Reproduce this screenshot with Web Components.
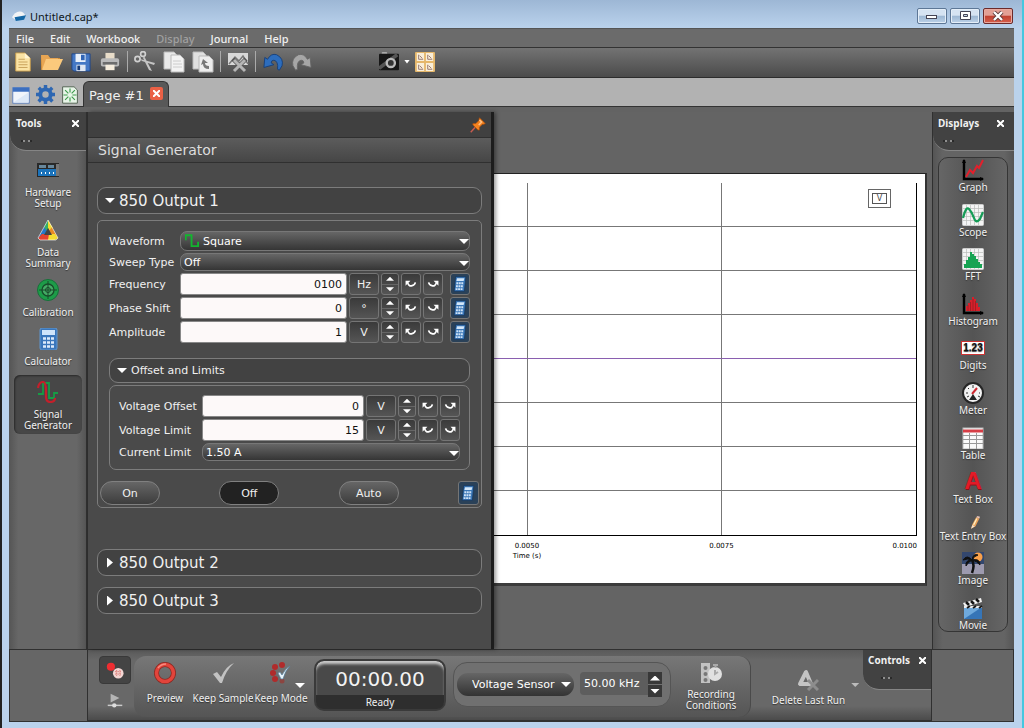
<!DOCTYPE html>
<html lang="en">
<head>
<meta charset="utf-8">
<title>Untitled.cap*</title>
<style>
html,body{margin:0;height:100%}
body{font-family:"Noto Sans","Open Sans",sans-serif;font-size:10px;color:#f0f0f0;background:#b9d1ea}
</style>
</head>
<body>
<app-window></app-window>
<script>
const A='<path d="M2 1v19h19" fill="none" stroke="#000" stroke-width="2.4"/><path d="M2 0l-2 4h4zM22 20l-4-2v4z" fill="#000"/>';
const GRID='<rect x=".5" y=".5" width="21" height="21" rx="1" fill="#f4f4f4" stroke="#ccc"/><path d="M4.500 1v20M8.500 1v20M12.500 1v20M16.500 1v20M1 4.500h20M1 8.500h20M1 12.500h20M1 16.500h20" stroke="#b9bcb9" stroke-width=".7"/>';
const ICONS={
 app:'<path d="M0 13Q4 5 12 4q7 0 9 8l-3 5H5z" fill="#f1f3f5"/><path d="M4 13l18-3-3 7-13 2z" fill="#1467a5"/>',
 doc:'<path d="M3 1h10l6 6v14H3z" fill="#fbe3a4" stroke="#c79a4a"/><path d="M13 1v6h6z" fill="#fff5d5"/><path d="M6 8h7M6 11h10M6 14h10M6 17h10" stroke="#c49d56"/>',
 folder:'<path d="M0 5h7l2 2h10v3H4L1 19H0z" fill="#c98937"/><path d="M0 4h7l2 3h8v11H1z" fill="#e7a553"/><path d="M5 8h17l-5 11H1z" fill="#fbc97c"/>',
 save:'<path d="M1 2h20v19H3l-2-2z" fill="#4478c5" stroke="#1f4587"/><rect x="5" y="2" width="11" height="9" fill="#e8f0fa"/><rect x="11" y="3" width="4" height="6" fill="#2f64b5"/><rect x="6" y="14" width="10" height="7" fill="#dfe7f2"/><rect x="7" y="15" width="3" height="5" fill="#163a77"/>',
 print:'<path d="M6 1h10v7H6z" fill="#e8dcc9"/><rect x="1" y="7" width="20" height="9" rx="2" fill="#b9b9b9"/><rect x="3" y="11" width="16" height="3" fill="#6c6c6c"/><path d="M6 14h10v6H6z" fill="#f5ecdc"/>',
 cut:'<circle cx="3.500" cy="8" r="2.600" fill="none" stroke="#d0d0d0" stroke-width="1.700"/><circle cx="9" cy="3" r="2.400" fill="none" stroke="#d0d0d0" stroke-width="1.700"/><path d="M6 8l15 4-1 2-12-4zM10 5l8 15-3-1-6-12z" fill="#c4c4c4"/>',
 copy:'<path d="M1 1h10l3 3v14H1z" fill="#e9e9e9" stroke="#bbb"/><path d="M8 4h9l4 4v13H8z" fill="#f3f3f3" stroke="#bbb"/><path d="M10 10h8M10 13h9M10 16h9" stroke="#ccc"/>',
 paste:'<path d="M1 1h10l3 3v14H1z" fill="#e0e0e0" stroke="#bbb"/><path d="M7 5h10l4 4v12H7z" fill="#ededed" stroke="#bbb"/><path d="M17 18q-6 0-6-5l-2 1 2-6 5 4-3 0q0 3 4 3z" fill="#777"/>',
 del:'<rect x="1" y="2" width="20" height="12" fill="#d8d8d8"/><path d="M2 13l6-7 4 4 4-5 5 8" fill="none" stroke="#777" stroke-width="1.500"/><path d="M6 8l13 13M19 8L6 21" stroke="#555" stroke-width="4.500"/><path d="M7 9l11 11M18 9L7 20" stroke="#b5b5b5" stroke-width="3"/>',
 undo:'<path d="M1 17L2 6l3 2Q9 1 15 3q8 4 6 12l-3 5-2-1q1-9-4-10-3 0-3 3l3 2z" fill="#2d6dbd" stroke="#173f78"/>',
 redo:'<path d="M21 17L20 6l-3 2Q13 1 7 3-1 7 1 15l3 5 2-1q-1-9 4-10 3 0 3 3l-3 2z" fill="#a6a6a6" stroke="#666"/>',
 camera:'<rect x="3" y="0" width="6" height="3" rx="1" fill="#aaa"/><rect x="0" y="2" width="22" height="18" rx="1" fill="#171717"/><path d="M0 18L20 3" stroke="#555" stroke-width="4"/><circle cx="13" cy="12" r="4.500" fill="#333" stroke="#bbb" stroke-width="2.600"/>',
 book:'<rect x="0" y="0" width="22" height="22" rx="1" fill="#e5b76b"/><path d="M2 1h8v9H2zM12 1h8v9h-8zM2 12h8v9H2zM12 12h8v9h-8z" fill="#f9eed9"/><path d="M4 3v5h5M14 3v5h5M4 14v5h5M14 14v5h5M5 4l3 3M15 4l3 3M5 15l3 3M15 15l3 3" fill="none" stroke="#8f6f69"/>',
 page:'<rect x="1" y="2" width="20" height="19" fill="#f1f5fb" stroke="#4f78bd"/><path d="M1 2h20v5H1z" fill="#3c6fc0"/><path d="M2 20L20 8v12z" fill="#dce8f7"/>',
 gear:'<circle cx="11" cy="11" r="6" fill="none" stroke="#2e67b2" stroke-width="4.500"/><path d="M11 0v4M11 18v4M0 11h4M18 11h4M3.200 3.200l3 3M16 16l3 3M18.800 3.200l-3 3M6 16l-3 3" stroke="#2e67b2" stroke-width="4"/>',
 newpg:'<path d="M2 1h14l4 4v16H2z" fill="#e8f5e8" stroke="#3d503d"/><path d="M11 3v5M11 14v5M3 11h5M14 11h5M5 5l4 4M17 17l-4-4M5 17l4-4M17 5l-4 4" stroke="#3d9b4c" stroke-width="1.400"/>',
 pin:'<path d="M1 21l8-9" stroke="#c75c50" stroke-width="2"/><path d="M13 1l8 8-2 1-2 0-4 4v4l-2 0-7-7 0-2h4l4-4z" fill="#f5831f" stroke="#a94d0c"/><path d="M13 4l3 3-4 4" fill="none" stroke="#ffc184" stroke-width="2"/>',
 hardware:'<rect x="0" y="4" width="22" height="14" fill="#292929"/><path d="M2 6h7v3H2zM11 6h6v3h-6z" fill="#67879c"/><rect x="1" y="10" width="18" height="7" fill="#1b73bb"/><path d="M4 14h1M8 14h1M12 14h1M16 14h1" stroke="#fff" stroke-width="2"/><path d="M19 5h3v12h-3z" fill="#777"/>',
 data:'<path d="M11 1L1 19l4 2 6-11z" fill="#2478c8"/><path d="M11 1L7 8l3 4 3-6z" fill="#36ae65"/><path d="M11 1l5 8-2 5-3-5z" fill="#f4dc31"/><path d="M15 8l6 11-4 2-5-9z" fill="#e88a23"/><path d="M1 19l4-4h8l-1 6H3z" fill="#e3422f"/><path d="M12 15h6l3 4-3 2h-7z" fill="#f4dc31"/><path d="M11 9l-4 7h8z" fill="#444"/><path d="M11 1L1 19l2 2h16l2-2z" fill="none" stroke="#fff" stroke-opacity=".6" stroke-linejoin="round"/>',
 calib:'<circle cx="11" cy="11" r="10.500" fill="#1d9c48" stroke="#17703a"/><circle cx="11" cy="11" r="6" fill="#45aa65" stroke="#184b2a" stroke-width="1.300"/><circle cx="11" cy="11" r="2.500" fill="none" stroke="#184b2a"/><path d="M11 2v18M2 11h18" stroke="#184b2a"/>',
 calc:'<rect x="3" y="0" width="17" height="22" rx="2" fill="#3a76bb" stroke="#6197cf"/><rect x="5" y="2" width="13" height="5" fill="#cfe4fa"/><path d="M6 10.500h3M10 10.500h3M14 10.500h3M6 14.500h3M10 14.500h3M14 14.500h3M6 18.500h3M10 18.500h3M14 18.500h3" stroke="#dceafb" stroke-width="2.600"/>',
 minicalc:'<path d="M5 1h14l-2 20H3z" fill="#3b78b8" stroke="#15355a"/><path d="M7 3h10l-1 4H6z" fill="#d3e7fa"/><path d="M6 10h10M5.500 14h10M5 18h10" stroke="#cfe2f6" stroke-width="2.600" stroke-dasharray="2.600 .8"/>',
 signal:'<path d="M1 13h5V2h6v15h5v-5h4" fill="none" stroke="#169c45" stroke-width="1.800"/><path d="M1 7q1-6 5-6 3 0 3 9v5q0 6 4 6 5 0 5-4" fill="none" stroke="#c41f2a" stroke-width="2.200"/>',
 graph:A+'<path d="M4 18l4-7 3 3 4-7 2 2 4-8" fill="none" stroke="#e1202c" stroke-width="2"/>',
 scope:GRID+'<path d="M1 14Q4 2 7 5t5 9 6 1l3-7" fill="none" stroke="#169c57" stroke-width="2.300"/>',
 fft:GRID+'<path d="M2 20v-4h2v-4h2V9h2V4h2v2h2v2h2v3h2v3h2v2h2v4z" fill="#16a352"/>',
 hist:A+'<path d="M4 18v-5h2v-3h2V7h2V4h2v2h2v4h2v4h2v4z" fill="#d81f2a"/><path d="M6 18v-6M8.500 18V9M11 18V6M13.500 18V8" stroke="#8d1d22" stroke-width=".7"/>',
 meter:'<circle cx="11" cy="11" r="10" fill="#f3f3f3" stroke="#252525" stroke-width="2"/><path d="M4 11h2M6 6l1 1M11 3v3M17 11h1M5 15l2-1M16 14l2 1" stroke="#333"/><path d="M10 12l5-6" stroke="#ce2830" stroke-width="2"/><path d="M7 18h8l-4-6z" fill="#222"/>',
 table:'<rect x="1" y="1" width="20" height="21" fill="#fafafa" stroke="#bbb"/><path d="M1 4h20" stroke="#d63e46" stroke-width="3"/><path d="M1 8.500h20M1 12.500h20M1 16.500h20M7.500 6v16M14.500 6v16" stroke="#999"/>',
 pencil:'<path d="M8 20l2-7 6-11 5 2-6 12z" fill="#e9a15b"/><path d="M16 2l5 2 1-3-4-1z" fill="#e5c1b5"/><path d="M8 20l2-6 4 2z" fill="#f1e2ce"/><path d="M12 14l5-10" stroke="#fff0c1" stroke-width="2"/>',
 image:'<rect x="0" y="0" width="22" height="22" fill="#33476e"/><path d="M0 12h22v10H0z" fill="#9d9aaf"/><circle cx="16" cy="5" r="4.500" fill="#f9a04a"/><path d="M10 21q3-8 0-13" fill="none" stroke="#101010" stroke-width="2.500"/><path d="M10 8Q5 2 1 8q5-2 9 0-7 0-6 6 2-4 6-6 1-7 6-5-4 1-6 5 8-2 8 5-3-4-8-5z" fill="#101010" stroke="#101010"/>',
 movie:'<path d="M2 10h18v12H2z" fill="#6fa9dc"/><path d="M2 22L20 10v12z" fill="#3675b7"/><path d="M1 6l18-5 1 4L3 10z" fill="#f2f2f2"/><path d="M4 5l3 3M9 4l3 3M14 2l3 3" stroke="#171717" stroke-width="2.500"/><path d="M2 10h18" stroke="#eee" stroke-width="2"/><path d="M5 11l3-2M11 11l3-2M17 11l3-2" stroke="#171717" stroke-width="2"/>',
 preview:'<circle cx="11" cy="11" r="8.500" fill="none" stroke="#8c2922" stroke-width="5"/><circle cx="11" cy="11" r="8.500" fill="none" stroke="#e2443b" stroke-width="3.500"/><path d="M4 6q3-4 8-4" fill="none" stroke="#fa8a7e" stroke-width="1.500"/>',
 check:'<path d="M1 12l4-2 4 5Q14 4 22 1q-8 7-12 20H8z" fill="#c2c2c2"/>',
 keep:'<g fill="#b02b2b"><circle cx="12" cy="3" r="3"/><circle cx="5" cy="5" r="3"/><circle cx="3" cy="11" r="3"/><circle cx="5" cy="17" r="3"/><circle cx="12" cy="19" r="2.500" fill="#8c4540"/></g><path d="M8 11l2-1 2 3q3-6 8-9-5 5-7 13h-2z" fill="#e8f3fa" stroke="#55809d" stroke-width=".7"/>',
 record:'<circle cx="6" cy="7" r="5" fill="#ef2d31"/><circle cx="15" cy="15" r="6.500" fill="#f3d6d3"/><path d="M11 13h8M11 16h8M13 11v8M17 11v8" stroke="#d35550" stroke-dasharray="1 1"/>',
 play:'<path d="M5 1v12l12-6z" fill="#b5b5b5"/><path d="M1 17h20" stroke="#ccc" stroke-width="2"/><circle cx="10" cy="17" r="3" fill="#ddd"/>',
 cond:'<path d="M1 1h9v20H1z" fill="#c2c2c2"/><circle cx="5.500" cy="6" r="2" fill="#777"/><circle cx="5.500" cy="12" r="2" fill="#777"/><circle cx="5.500" cy="18" r="2" fill="#777"/><circle cx="15" cy="12" r="7" fill="#e0e0e0"/><path d="M13 3h5M15.500 3v3M15 8v4l3-2" stroke="#aaa" stroke-width="2" fill="none"/>',
 delrun:'<path d="M9 3L3 15h11z" fill="none" stroke="#c4c4c4" stroke-width="4" stroke-linejoin="round"/><path d="M11 11l10 10M21 11L11 21" stroke="#8d8d8d" stroke-width="3"/>',
 square:'<path d="M1 10V3h8v15h9v-6" fill="none" stroke="#12b52f" stroke-width="2.600"/>',
 cw:'<path d="M5 9q2 7 8 5 5-1 6-6" fill="none" stroke="#fff" stroke-width="3"/><path d="M1 14V5h9z" fill="#fff"/>',
 ccw:'<path d="M17 9q-2 7-8 5-5-1-6-6" fill="none" stroke="#fff" stroke-width="3"/><path d="M21 14V5h-9z" fill="#fff"/>'
};
const define=(name,html,setup)=>customElements.define(name,class extends HTMLElement{
 connectedCallback(){
  if(this.shadowRoot)return;
  const root=this.attachShadow({mode:'open'});
  root.innerHTML=typeof html==='function'?html(this):html;
  if(setup)setup(this,root);
 }
});
const BTN='button{font:inherit;color:inherit;padding:0;margin:0;border:0;background:none;display:flex;align-items:center;justify-content:center}';
const KEY='.key{border:1px solid #757575;border-radius:3px;background:linear-gradient(#3a3a3a,#555);box-sizing:border-box}';

define('ui-icon',el=>`<style>:host{display:block;flex:none;width:${el.getAttribute('size')||22}px;height:${el.getAttribute('size')||22}px}svg{display:block;width:100%;height:100%}</style><svg viewBox="0 0 22 22" aria-hidden="true">${ICONS[el.getAttribute('name')]}</svg>`);

define('ui-arrow',`<style>:host{display:block;flex:none;width:10px;height:5px;background:#fff;clip-path:polygon(0 0,100% 0,50% 100%)}:host([dir=up]){clip-path:polygon(0 100%,100% 100%,50% 0)}:host([dir=right]){width:6px;height:10px;clip-path:polygon(0 0,100% 50%,0 100%)}:host([small]){width:8px;height:4px}</style>`);

define('title-bar',`<style>${BTN}
:host{display:flex;align-items:center;height:28px;color:#101820;font-size:11px;box-sizing:border-box;padding:4px 1px 0 3px}
h1{flex:1;font:inherit;margin:0 0 0 4px}
.b{display:flex;gap:3px;padding-bottom:1px}
button{width:30px;height:16px;border:1px solid #5d7796;border-radius:2px;background:linear-gradient(#d5e3f2 45%,#9cb7d3 50%,#bdd2e8);box-shadow:inset 0 0 0 1px #e4eef8}
.close{background:linear-gradient(#e3a095 45%,#c14030 50%,#d5604c);border-color:#6b2a2a;box-shadow:inset 0 0 0 1px #e8aaa0}
svg{display:block}
</style><ui-icon name="app" size="14"></ui-icon><h1>Untitled.cap*</h1>
<div class="b"><button aria-label="Minimize"><svg width="12" height="8"><rect x=".5" y="3.500" width="10" height="3" fill="#fff" stroke="#445"/></svg></button>
<button aria-label="Maximize"><svg width="11" height="9"><path d="M.5.5h10v8H.5zM3.500 3.500v2h4v-2z" fill="#fff" fill-rule="evenodd" stroke="#445"/></svg></button>
<button class="close" aria-label="Close"><svg width="12" height="10"><path d="M2 1l8 8M10 1L2 9" stroke="#5b3a3a" stroke-width="4"/><path d="M2 1l8 8M10 1L2 9" stroke="#fff" stroke-width="2.400"/></svg></button></div>`);

define('menu-bar',`<style>${BTN}:host{display:flex;height:18px;background:#6b6b6b;border-bottom:1px solid #333;padding-left:7px;gap:16px;font-size:11px;font-weight:500}button:disabled{color:#a0a0a0}</style>
<button>File</button><button>Edit</button><button>Workbook</button><button disabled>Display</button><button>Journal</button><button>Help</button>`);

define('tool-bar',`<style>${BTN}:host{display:flex;align-items:center;box-sizing:border-box;height:30px;background:linear-gradient(#737373,#4b4b4b);border-bottom:1px solid #2c2c2c;padding:0 0 2px 3px}
div{display:flex;gap:8px;align-items:center}i{width:1px;height:21px;background:#aaa;margin:0 6px 0 7px}.l button{width:21px}.r{margin-left:67px;gap:5px}</style>
<div class="l"><button aria-label="New"><ui-icon name="doc" size="20"></ui-icon></button><button aria-label="Open"><ui-icon name="folder"></ui-icon></button><button aria-label="Save"><ui-icon name="save" size="20"></ui-icon></button><button aria-label="Print"><ui-icon name="print" size="20"></ui-icon></button></div><i></i>
<div class="l"><button aria-label="Cut"><ui-icon name="cut"></ui-icon></button><button aria-label="Copy"><ui-icon name="copy"></ui-icon></button><button aria-label="Paste"><ui-icon name="paste"></ui-icon></button></div><i></i>
<div class="l"><button aria-label="Delete"><ui-icon name="del"></ui-icon></button></div><i></i>
<div class="l"><button aria-label="Undo"><ui-icon name="undo" size="20"></ui-icon></button><button aria-label="Redo"><ui-icon name="redo" size="20"></ui-icon></button></div>
<div class="r"><button aria-label="Snapshot"><ui-icon name="camera" size="20"></ui-icon></button><button aria-label="Snapshot options"><ui-arrow style="width:6px;height:4px"></ui-arrow></button><button aria-label="Journal view"><ui-icon name="book" size="20"></ui-icon></button></div>`);

define('tab-strip',`<style>${BTN}:host{display:flex;height:28px;background:#b2b2b2;border-bottom:1px solid #333;padding-left:3px;align-items:center}
.i{display:flex;gap:6px;padding-top:5px}.tab{align-self:flex-end;box-sizing:border-box;display:flex;height:26px;margin:0 0 -1px 4px;padding:0 5px 2px 5px;gap:6px;align-items:center;background:#585858;border:1px solid #333;border-bottom:0;border-radius:6px 6px 0 0;font:13px "DejaVu Sans",sans-serif}
.tab b{font-weight:400;padding-top:3px}.x{width:13px;height:13px;background:#ea6045;border-radius:2px}</style>
<div class="i"><button aria-label="Pages"><ui-icon name="page" size="18"></ui-icon></button><button aria-label="Properties"><ui-icon name="gear" size="19"></ui-icon></button><button aria-label="New page"><ui-icon name="newpg" size="18"></ui-icon></button></div>
<div class="tab"><b>Page #1</b><button class="x" aria-label="Close page"><svg width="7" height="7"><path d="M0 0l7 7M7 0L0 7" stroke="#fff" stroke-width="2"/></svg></button></div>`);

define('dock-header',`<style>${BTN}:host{display:block;box-sizing:border-box;height:39px;padding:4px 7px 0 6px;background:#424242;border-bottom:1px solid #858585;border-radius:0 0 0 16px;font-weight:700}
:host([wide]){padding:4px 10px 0 5px}
div{display:flex;justify-content:space-between;align-items:center;height:14px}i{display:block;width:2px;height:2px;border-radius:1px;background:#aaa;margin:10px 0 0 7px;box-shadow:5px 0 #aaa,-2px 0 #222,7px 0 #222}:host([mid]) i{margin-left:15px}</style>
<div><slot></slot><button aria-label="Close"><svg width="7" height="7"><path d="M0 0l7 7M7 0L0 7" stroke="#fff" stroke-width="2"/></svg></button></div><i></i>`);

define('tool-item',el=>`<style>${BTN}:host{display:block}button{width:100%;flex-direction:column;line-height:var(--lh,11px);text-align:center;box-sizing:border-box;padding:var(--pad,0);border-radius:6px;text-shadow:0 1px 1px #333}
:host([selected]) button{background:#474747;box-shadow:inset 1px 1px 2px #292929}
.t{margin-top:var(--gap,0);white-space:pre}.d{box-sizing:border-box;display:flex;height:22px;align-items:center;font:700 10px/12px "Liberation Sans",sans-serif}.d b{background:#fff;border:1px solid #c33;color:#111;padding:0 1px}.a{font:700 24px/20px "Liberation Sans",sans-serif;color:#e21b27;height:20px;padding-bottom:2px;text-shadow:1px 1px #8a1118}</style>
<button>${el.getAttribute('icon')==='digits'?'<span class="d"><b>1.23</b></span>':el.getAttribute('icon')==='text'?'<span class="a">A</span>':`<ui-icon name="${el.getAttribute('icon')}" size="${el.getAttribute('size')||22}"></ui-icon>`}<span class="t"><slot></slot></span></button>`);

define('tools-dock',`<style>:host{display:flex;flex-direction:column;box-sizing:border-box;width:79px;padding-left:1px;background:linear-gradient(90deg,#555,#676767 12%,#676767 88%,#555);border-right:2px solid #303030}
nav{padding:2px 4px 0;--pad:6px 0 5px;--gap:6px}tool-item{margin-bottom:-1px}tool-item[selected]{margin-top:4px;--pad:6px 0 3px}</style><dock-header>Tools</dock-header><nav>
<tool-item icon="hardware">Hardware
Setup</tool-item><tool-item icon="data">Data
Summary</tool-item><tool-item icon="calib">Calibration</tool-item><tool-item icon="calc">Calculator</tool-item><tool-item icon="signal" selected>Signal
Generator</tool-item></nav>`);

define('displays-dock',`<style>:host{display:flex;flex-direction:column;box-sizing:border-box;width:82px;background:linear-gradient(90deg,#555,#646464 12%,#646464 88%,#555);border-left:1px solid #303030}
nav{flex:1;display:flex;flex-direction:column;justify-content:space-between;margin:6px 6px 17px 5px;border:1px solid #353535;border-radius:10px;background:linear-gradient(90deg,#666,#545454 50%,#666);padding-top:1px;--lh:12px}</style><dock-header wide>Displays</dock-header><nav>
${[['graph','Graph'],['scope','Scope'],['fft','FFT'],['hist','Histogram'],['digits','Digits'],['meter','Meter'],['table','Table'],['text','Text Box'],['pencil','Text Entry Box',14],['image','Image'],['movie','Movie']].map(r=>`<tool-item icon="${r[0]}" size="${r[2]||22}">${r[1]}</tool-item>`).join('')}</nav>`);

define('fold-header',`<style>${BTN}:host{display:block}button{width:100%;height:27px;box-sizing:border-box;border:1px solid #7c7c7c;border-radius:9px;background:#424242;justify-content:flex-start;padding:0 7px;gap:4px;font-size:15px}:host([sub]) button{height:25px;font-size:11px}</style>
<button><ui-arrow></ui-arrow><slot></slot></button>`,(el,r)=>{if(el.hasAttribute('closed')){r.querySelector('ui-arrow').setAttribute('dir','right');r.querySelector('button').style.gap='6px';r.querySelector('button').style.paddingLeft='9px'}});

define('pick-row',el=>`<style>:host{display:flex;align-items:center;height:${el.getAttribute('h')}px}label{flex:none;width:var(--label)}div{position:relative;flex:1;height:100%}
select{appearance:none;width:100%;height:100%;box-sizing:border-box;border:1px solid #777;border-radius:7px;background:linear-gradient(#666,#353535);color:#fff;font:inherit;padding:0 16px 0 ${el.hasAttribute('icon')?22:3}px;margin:0}
ui-arrow{position:absolute;right:1px;top:8px;pointer-events:none}ui-icon{position:absolute;left:5px;top:2px}</style>
<label for="s">${el.getAttribute('label')}</label><div><select id="s"><option>${el.getAttribute('value')}</option></select>${el.hasAttribute('icon')?'<ui-icon name="square" size="16"></ui-icon>':''}<ui-arrow></ui-arrow></div>`);

define('value-row',el=>`<style>${BTN}${KEY}:host{display:flex;align-items:center;height:22px;gap:2px}label{flex:none;width:calc(var(--label) - 2px)}
input{flex:1;min-width:0;height:22px;box-sizing:border-box;border:1px solid #888;border-radius:3px;background:#fdf9f9;color:#111;font:inherit;text-align:right;padding:0 4px;margin:0}
.u{width:30px;height:22px}.k{width:20px;height:22px}.c{margin-left:5px;background:#2a4158}.s{width:18px;height:22px;display:flex;flex-direction:column}.s button{flex:1}.s button+button{border-top:1px solid #666}</style>
<label for="v">${el.getAttribute('label')}</label><input id="v" value="${el.getAttribute('value')}"><button class="key u">${el.getAttribute('unit')}</button><span class="key s"><button aria-label="Increase"><ui-arrow dir="up" small></ui-arrow></button><button aria-label="Decrease"><ui-arrow small></ui-arrow></button></span><button class="key k" aria-label="Step down"><ui-icon name="cw" size="12"></ui-icon></button><button class="key k" aria-label="Step up"><ui-icon name="ccw" size="12"></ui-icon></button>${el.hasAttribute('calc')?'<button class="key k c" aria-label="Calculator"><ui-icon name="minicalc" size="16"></ui-icon></button>':''}`);

define('signal-panel',`<style>${BTN}${KEY}:host{display:flex;flex-direction:column;width:406px;box-sizing:border-box;background:#4a4a4a;border-right:3px solid #1d1d1d;font:11px "DejaVu Sans",sans-serif;box-shadow:2px 0 4px #0006;z-index:1}
.top{display:flex;justify-content:flex-end;align-items:center;height:25px;padding-right:5px;background:#404040;border-bottom:1px solid #2f2f2f}
h2{margin:0;height:24px;font:14px/24px "DejaVu Sans",sans-serif;color:#ddd;padding-left:10px;background:linear-gradient(#5c5c5c,#464646);border-bottom:1px solid #303030}
main{padding:24px 9px 0 9px;display:flex;flex-direction:column}
.box{box-sizing:border-box;border:1px solid #7c7c7c;border-radius:7px;display:flex;flex-direction:column;gap:2px}
.outer{margin-top:6px;padding:10px 11px 2px;--label:71px;border-radius:5px}.inner{padding:9px 9px 8px 9px;--label:83px}
fold-header[sub]{margin-top:13px}
.modes{display:flex;justify-content:space-between;align-items:center;margin:9px -9px 0}.modes button{height:24px}.pill{width:60px;border:1px solid #808080;border-radius:12px;background:linear-gradient(#666,#3d3d3d);box-sizing:border-box}.on{background:#222}.modes .k{width:21px;background:#2a4158}
.closed{display:flex;flex-direction:column;gap:11px;margin-top:41px}</style>
<div class="top"><button aria-label="Pin panel"><ui-icon name="pin" size="16"></ui-icon></button></div><h2>Signal Generator</h2>
<main><fold-header>850 Output 1</fold-header><section class="box outer">
<pick-row h="20" icon label="Waveform" value="Square"></pick-row><pick-row h="18" label="Sweep Type" value="Off"></pick-row>
<value-row calc label="Frequency" value="0100" unit="Hz"></value-row><value-row calc label="Phase Shift" value="0" unit="°"></value-row><value-row calc label="Amplitude" value="1" unit="V"></value-row>
<fold-header sub>Offset and Limits</fold-header>
<section class="box inner"><value-row label="Voltage Offset" value="0" unit="V"></value-row><value-row label="Voltage Limit" value="15" unit="V"></value-row><pick-row h="18" label="Current Limit" value="1.50 A"></pick-row></section>
<div class="modes"><button class="pill">On</button><button class="pill on" aria-pressed="true">Off</button><button class="pill">Auto</button><button class="key k" aria-label="Calculator"><ui-icon name="minicalc" size="16"></ui-icon></button></div>
</section><div class="closed"><fold-header closed>850 Output 2</fold-header><fold-header closed>850 Output 3</fold-header></div></main>`);

define('graph-view',`<style>:host{display:block;flex:1;min-width:0;background:#646464;padding:61px 5px 0 0}
.page{position:relative;background:#fff;color:#000;border:1px solid #222;border-left:0;border-bottom:3px solid #3c3c3c;border-right:2px solid #333;padding:9px 8px 0 0;height:400px;font:7px/10px "DejaVu Sans",sans-serif}
.plot{display:grid;grid-template-columns:34fr 195fr 195fr;grid-template-rows:repeat(8,44px);border-bottom:1px solid #000;border-right:1px solid #000;}
.plot i{border-right:1px solid #777;border-bottom:1px solid #777}.plot i:nth-child(3n){border-right:0}.plot i:nth-child(n+22){border-bottom:0}.plot i.zero{border-bottom-color:#8a5fb0}
.x{display:grid;grid-template-columns:66fr 324fr 34fr;padding-top:5px;text-align:center;white-space:nowrap}.x b{font-weight:400}.x b:last-child{text-align:right}
.t{width:66px;text-align:center}
.v{position:absolute;right:34px;top:15px;width:23px;height:19px;box-sizing:border-box;border:1px solid #666;padding:3px}.v b{display:block;border:1px solid #555;font-weight:400;font-size:8px;text-align:center;height:9px;color:#444}</style>
<div class="page"><div class="plot">${Array.from({length:24},(_,i)=>i>8&&i<12?'<i class="zero"></i>':'<i></i>').join('')}</div><div class="x"><b>0.0050</b><b>0.0075</b><b>0.0100</b></div><div class="t">Time (s)</div><span class="v"><b>V</b></span></div>`);

define('control-bar',`<style>${BTN}:host{flex:1;min-width:0;display:flex;background:linear-gradient(#5a5a5a,#686868 15%,#686868 80%,#4b4b4b);box-sizing:border-box;height:73px;border-top:1px solid #303030;border-bottom:2px solid #303030;border-right:1px solid #303030;padding-left:11px;--gap:5px}
.side{width:32px;padding-top:6px;display:flex;flex-direction:column;align-items:center;gap:9px}.rec{width:32px;height:28px;background:#444;border-radius:4px;border:1px solid #393939}
.grp{display:flex;align-items:flex-start;width:617px;height:61px;margin:6px 0 0 3px;box-sizing:border-box;border-radius:12px;background:linear-gradient(#777,#555);border-right:1px solid #4a4a4a;padding:0 7px 0 0}
.grp>tool-item{margin-top:6px;width:62px;--gap:9px}.grp>.smp{width:60px;overflow:hidden;margin-left:-3px}
.mode{position:relative;width:56px;--gap:9px}.mode tool-item{margin-top:6px}.mode ui-arrow{position:absolute;right:4px;top:27px}
.time{width:132px;height:52px;margin:3px 0 0 5px;border-radius:10px;background:#494949;border:2px solid #3a3a3a;box-sizing:border-box;box-shadow:inset 0 4px 3px -1px #ccc;text-align:center;display:flex;flex-direction:column;justify-content:flex-end}
.time b{font:20px/32px "DejaVu Sans",sans-serif;color:#f3f3f3}.time span{background:#2e2e2e;border-radius:0 0 7px 7px;line-height:14px;height:14px}
.smpl{display:flex;align-items:center;gap:6px;width:218px;height:45px;box-sizing:border-box;margin:6px 0 0 7px;border:1px solid #555;border-radius:14px;background:#707070;padding:0 8px 0 3px;font:11px "DejaVu Sans",sans-serif}
.sel{position:relative;width:117px;height:23px}.sel select{appearance:none;width:100%;height:100%;border:0;border-radius:11px;background:linear-gradient(#666,#333);color:#fff;font:inherit;padding:0 0 0 15px}.sel ui-arrow{position:absolute;right:3px;top:9px;pointer-events:none}
input{box-sizing:border-box;width:68px;height:23px;border:0;border-radius:4px 0 0 4px;background:#5d5d5d;color:#fff;font:inherit;padding:0 4px}
.rate{display:flex}.sp{display:flex;flex-direction:column;gap:1px}.sp button{width:14px;height:12px;background:#383838}
.grp>.cond{margin-left:auto;width:64px;--gap:5px}
.del{flex:1;display:flex;justify-content:center;padding:19px 0 0 17px}.del ui-arrow{margin:14px 0 0 6px;background:#bbb}.del tool-item{--gap:4px}
dock-header{width:68px;height:40px;padding:3px 5px 0 5px}</style>
<div class="side"><button class="rec" aria-label="Record"><ui-icon name="record" size="18"></ui-icon></button><button aria-label="Playback"><ui-icon name="play" size="16"></ui-icon></button></div>
<div class="grp"><tool-item icon="preview">Preview</tool-item><tool-item class="smp" icon="check">Keep Sample</tool-item><div class="mode"><tool-item icon="keep">Keep Mode</tool-item><ui-arrow></ui-arrow></div>
<div class="time"><b>00:00.00</b><span>Ready</span></div>
<div class="smpl"><div class="sel"><select aria-label="Sensor"><option>Voltage Sensor</option></select><ui-arrow></ui-arrow></div><div class="rate"><input aria-label="Sample rate" value="50.00 kHz"><div class="sp"><button aria-label="Faster"><ui-arrow dir="up"></ui-arrow></button><button aria-label="Slower"><ui-arrow></ui-arrow></button></div></div></div>
<tool-item class="cond" icon="cond">Recording
Conditions</tool-item></div>
<div class="del"><tool-item icon="delrun">Delete Last Run</tool-item><ui-arrow small></ui-arrow></div><dock-header mid>Controls</dock-header>`);

define('app-window',`<style>:host{display:flex;flex-direction:column;min-height:100vh;box-sizing:border-box;border-left:2px solid #222;border-right:2px solid #45c7df;padding:0 8px 6px 7px;background:linear-gradient(#9db7d5,#bad2ec 28px)}
.frame{flex:1;display:flex;flex-direction:column;background:#646464;border-top:1px solid #555}
.main{flex:1;display:flex;border-top:5px solid #636363}.bottom{display:flex}.c{box-sizing:border-box;background:#666;border:1px solid #303030}.l{width:79px}.r{width:82px;border-left:0}</style>
<title-bar></title-bar><div class="frame"><menu-bar></menu-bar><tool-bar></tool-bar><tab-strip></tab-strip>
<div class="main"><tools-dock></tools-dock><signal-panel></signal-panel><graph-view></graph-view><displays-dock></displays-dock></div>
<div class="bottom"><div class="c l"></div><control-bar></control-bar><div class="c r"></div></div></div>`);
</script>
</body>
</html>
